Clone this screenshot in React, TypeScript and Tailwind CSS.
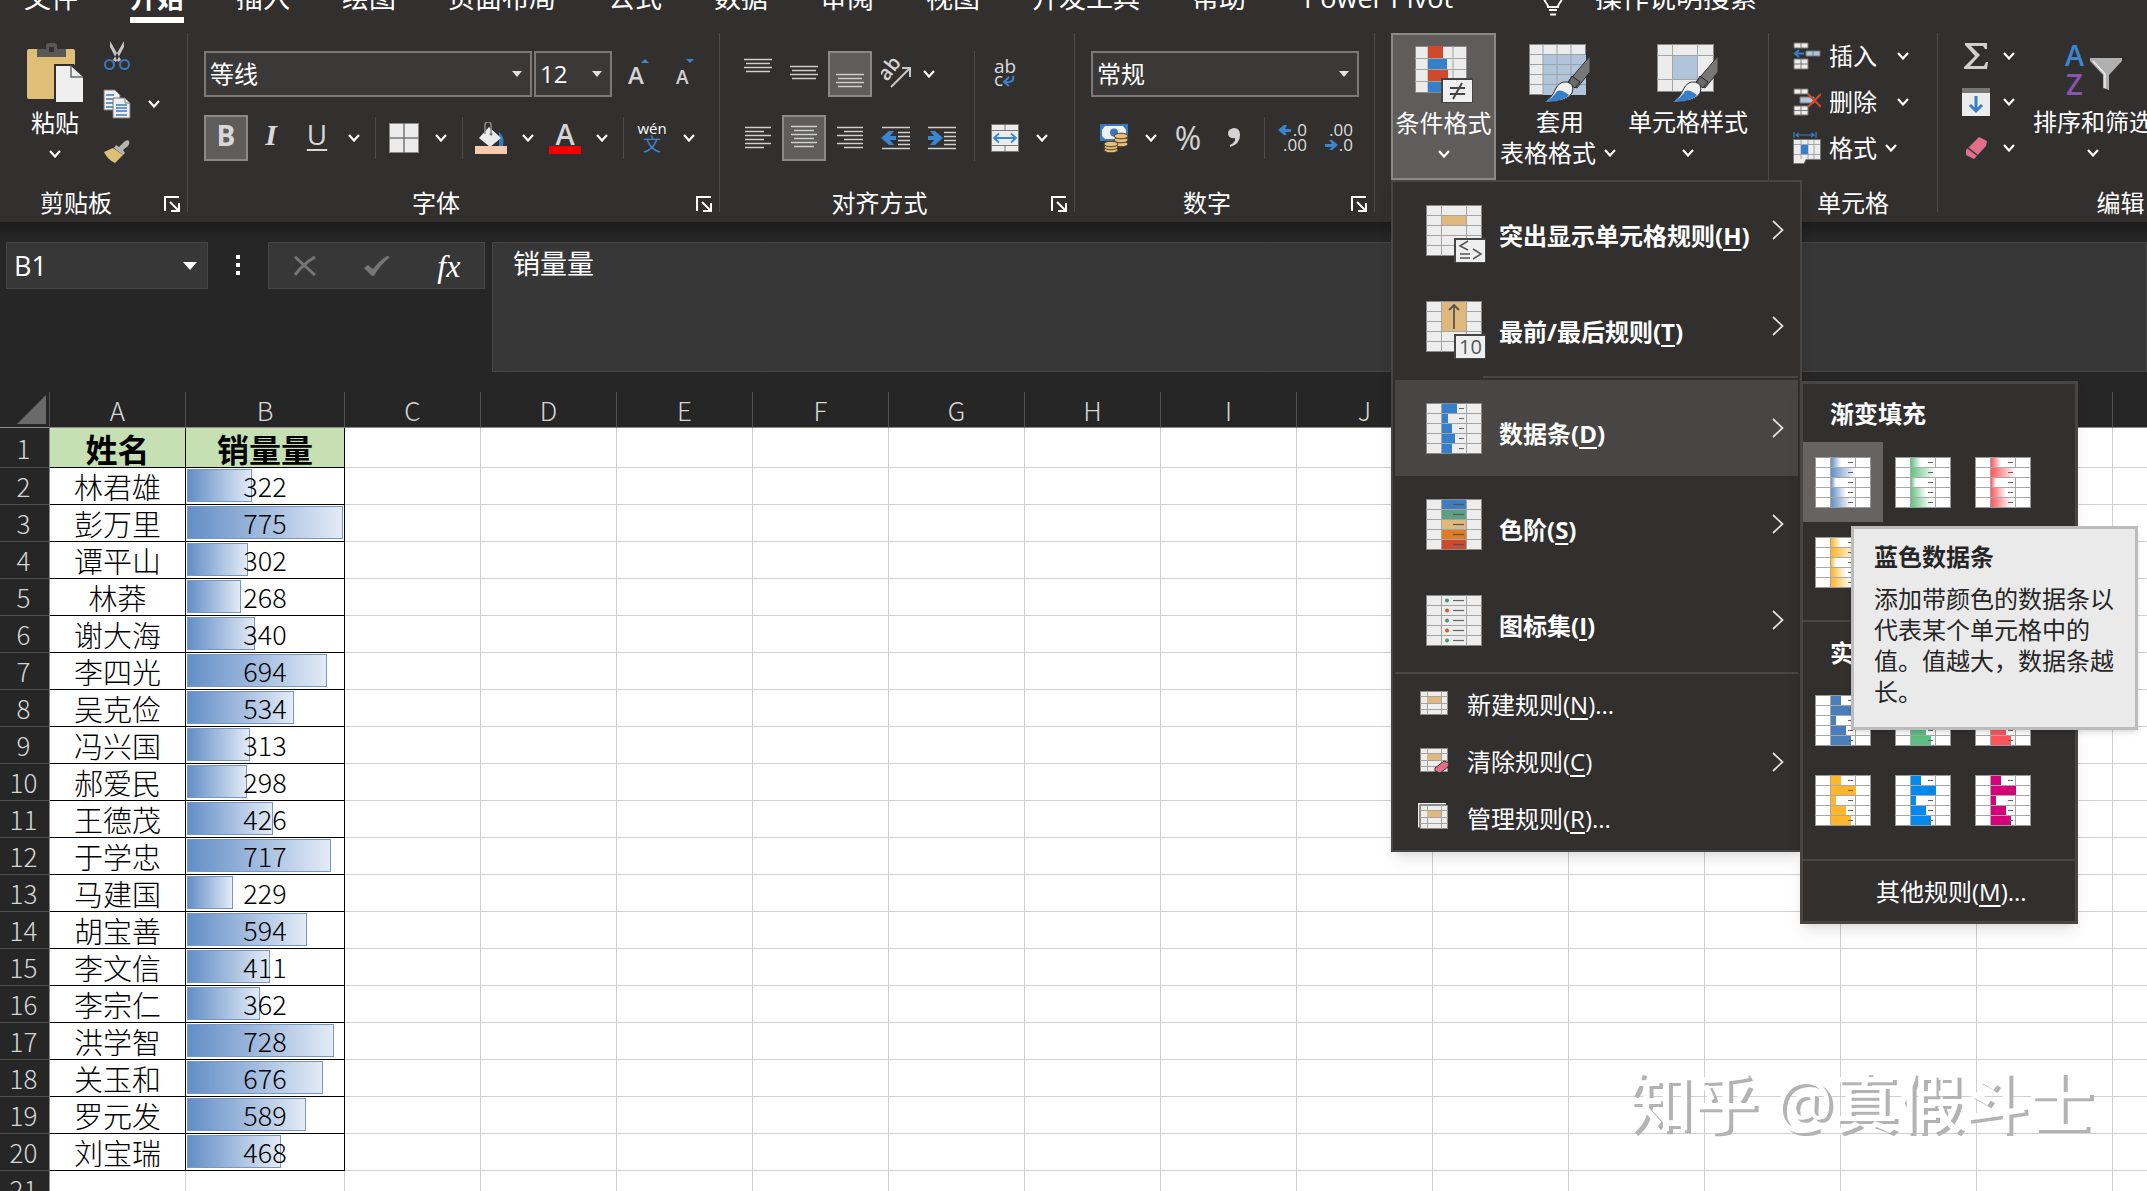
import React from "react";

const rows: [string, number][] = [
  ["林君雄", 322],
  ["彭万里", 775],
  ["谭平山", 302],
  ["林莽", 268],
  ["谢大海", 340],
  ["李四光", 694],
  ["吴克俭", 534],
  ["冯兴国", 313],
  ["郝爱民", 298],
  ["王德茂", 426],
  ["于学忠", 717],
  ["马建国", 229],
  ["胡宝善", 594],
  ["李文信", 411],
  ["李宗仁", 362],
  ["洪学智", 728],
  ["关玉和", 676],
  ["罗元发", 589],
  ["刘宝瑞", 468],
];

const maxValue = 775;
const emptyColumns = "CDEFGHIJKLMNOP".split("");

/* ---------- small shared parts ---------- */

function Chevron() {
  return (
    <svg className="w-3 h-2 shrink-0" viewBox="0 0 12 8" fill="none">
      <path d="M1 1l5 5.5L11 1" stroke="#fff" strokeWidth="2.2" />
    </svg>
  );
}

function ArrowRight() {
  return (
    <svg className="w-3 h-5 shrink-0" viewBox="0 0 12 20" fill="none">
      <path d="M1 1l9.500 9L1 19" stroke="#e0e0e0" strokeWidth="1.800" />
    </svg>
  );
}

function DropButton({ label, narrow }: { label: string; narrow?: boolean }) {
  return (
    <button
      aria-label={label}
      className={
        narrow
          ? "flex items-center justify-center w-5 h-[46px]"
          : "flex items-center justify-center w-7 h-[46px]"
      }
    >
      <Chevron />
    </button>
  );
}

type ToolProps = {
  label: string;
  active?: boolean;
  children: React.ReactNode;
};

function Tool({ label, active, children }: ToolProps) {
  return (
    <button
      aria-label={label}
      className={
        active
          ? "flex items-center justify-center w-11 mx-px h-[46px] bg-[#5e5d5b] border-2 border-[#8a8987]"
          : "flex items-center justify-center w-[46px] h-[46px]"
      }
    >
      {children}
    </button>
  );
}

function Divider() {
  return <div className="w-px h-[42px] ml-[7px] mr-[5px] bg-[#4c4b49]" />;
}

type GroupProps = {
  title: string;
  width: string;
  launcher?: boolean;
  children: React.ReactNode;
};

function Group({ title, width, launcher, children }: GroupProps) {
  return (
    <section
      aria-label={title}
      className={`flex flex-col shrink-0 h-[179px] border-r border-[#4c4b49] ${width}`}
    >
      <div className="h-[157px]">{children}</div>
      <div className="flex h-[22px]">
        <h2
          className={
            launcher
              ? "flex-1 pr-3 text-center leading-[26px]"
              : "flex-1 text-center leading-[26px]"
          }
        >
          {title}
        </h2>
        {launcher && (
          <button aria-label={`${title}设置`} className="self-end mr-[7px]">
            <svg className="w-4 h-4" viewBox="0 0 16 16" fill="none" stroke="#fff" strokeWidth="2">
              <path d="M1 15V1h14" />
              <path d="M6 6l8 8M15 7v8H7" />
            </svg>
          </button>
        )}
      </div>
    </section>
  );
}

type ComboProps = {
  label: string;
  value: string;
  width: string;
};

function Combo({ label, value, width }: ComboProps) {
  return (
    <div className={`relative h-[46px] ${width}`}>
      <select
        aria-label={label}
        className="w-full h-full pl-1 appearance-none bg-[#3a3938] border-2 border-[#7b7a78] text-2xl"
      >
        <option>{value}</option>
      </select>
      <svg className="absolute right-[10px] top-5 w-[10px] h-[6px]" viewBox="0 0 10 6">
        <path d="M0 0h10L5 6z" fill="#e0e0e0" />
      </svg>
    </div>
  );
}

/* ---------- ribbon icons ---------- */

function PasteIcon() {
  return (
    <svg className="w-14 h-[60px]" viewBox="0 0 56 60">
      <rect x="0" y="6" width="48" height="50" rx="2" fill="#dfbe78" />
      <path d="M10 6h9V3q0-3 3-3h5q3 0 3 3v3h9v8H10z" fill="#595857" />
      <rect x="22" y="4" width="5" height="5" fill="#32302f" />
      <path d="M27 21h20l9 12v27H27z" fill="#32302f" />
      <path d="M29 23h15l12 11v25H29z" fill="#efefef" />
      <path d="M44 23v11h12" fill="none" stroke="#6b6b6b" strokeWidth="1.500" />
    </svg>
  );
}

function ScissorsIcon() {
  return (
    <svg className="w-[26px] h-[30px]" viewBox="0 0 26 30">
      <path d="M6 0l11 19-3 2L6 6zM20 0L9 19l3 2 8-15z" fill="#c4c4c4" />
      <circle cx="5.500" cy="23.500" r="4.500" fill="none" stroke="#3b79bf" strokeWidth="2" />
      <circle cx="20.500" cy="23.500" r="4.500" fill="none" stroke="#3b79bf" strokeWidth="2" />
    </svg>
  );
}

function CopyIcon() {
  return (
    <svg className="w-7 h-[30px]" viewBox="0 0 28 30">
      <path d="M1 1h11l5 5v15H1z" fill="#f0f0f0" stroke="#777" />
      <path d="M3 6h8M3 10h8M3 14h8M3 18h7" stroke="#3b79bf" strokeWidth="1.500" />
      <path d="M10 9h12l5 5v15H10z" fill="#f0f0f0" stroke="#777" />
      <path d="M22 9v5h5" fill="none" stroke="#777" />
      <path d="M13 16h11M13 19h11M13 22h11M13 26h11" stroke="#3b79bf" strokeWidth="1.500" />
    </svg>
  );
}

function BrushIcon() {
  return (
    <svg className="w-[26px] h-6" viewBox="0 0 26 24">
      <path d="M25 1q-2-2-5 1l-5 5-3-2-2 3 9 7 2-2-2-3 5-4q2-3 1-5z" fill="#b4b4b4" />
      <path d="M9 8L0 12q4 8 11 11l8-8z" fill="#dfbe78" />
    </svg>
  );
}

function BordersIcon() {
  return (
    <svg className="w-[30px] h-[30px]" viewBox="0 0 30 30">
      <rect x=".5" y=".5" width="29" height="29" fill="#ececec" stroke="#8a8a8a" />
      <path d="M15 0v30M0 15h30" stroke="#777" strokeWidth="1.500" />
    </svg>
  );
}

function FillIcon() {
  return (
    <svg className="w-8 h-8" viewBox="0 0 32 32">
      <path d="M24 10q6 4 4 14h-4z" fill="#3b79bf" />
      <path d="M14 5l12 11-11 9L4 16z" fill="#ececec" />
      <path d="M10 12V3q0-3 3-3t3 3v8" fill="none" stroke="#8a8a8a" strokeWidth="1.500" />
      <circle cx="16" cy="12" r="1.500" fill="#777" />
      <rect y="24" width="32" height="8" fill="#f8cbad" />
    </svg>
  );
}

type LinesProps = { lines: [number, number, number][] };

// each line is [start, end, y]
function LinesIcon({ lines }: LinesProps) {
  return (
    <svg className="w-7 h-8" viewBox="0 0 28 32">
      {lines.map(([x1, x2, y]) => (
        <path key={y} d={`M${x1} ${y}.5H${x2}`} stroke="#cfcfcf" strokeWidth="1.500" />
      ))}
    </svg>
  );
}

function IndentIcon({ out }: { out?: boolean }) {
  return (
    <svg className="w-[30px] h-6" viewBox="0 0 30 24">
      <path
        d="M1 1.500h28M17 6.500h12M17 10.500h12M17 14.500h12M17 18.500h12M1 22.500h28"
        stroke="#cfcfcf"
        strokeWidth="1.500"
      />
      <path
        d={out ? "M15 10H9l4-5H8L0 12l8 7h5l-4-5h6z" : "M1 10h6L3 5h5l8 7-8 7H3l4-5H1z"}
        fill="#3b86d0"
      />
    </svg>
  );
}

function OrientationIcon() {
  return (
    <svg className="w-[30px] h-9" viewBox="0 0 30 36">
      <text
        x="6"
        y="26"
        fontSize="20"
        fontWeight="600"
        fill="#d4d4d4"
        fontFamily="Open Sans"
        transform="rotate(-52 6 26)"
      >
        ab
      </text>
      <path d="M10 31L29 12M21 12h8v9" fill="none" stroke="#c8c8c8" strokeWidth="2" />
    </svg>
  );
}

function WrapIcon() {
  return (
    <svg className="w-6 h-[30px]" viewBox="0 0 24 30">
      <text x="1" y="14" fontSize="19" fill="#dcdcdc" fontFamily="Open Sans">
        ab
      </text>
      <text x="1" y="27" fontSize="19" fill="#dcdcdc" fontFamily="Open Sans">
        c
      </text>
      <path d="M20 17q2 7-8 6M16 18l-5 5 5 4" fill="none" stroke="#3b86d0" strokeWidth="2" />
    </svg>
  );
}

function MergeIcon() {
  return (
    <svg className="w-7 h-7" viewBox="0 0 28 28">
      <rect x=".5" y=".5" width="27" height="27" fill="#ececec" stroke="#777" />
      <path d="M0 6.500h28M0 21.500h28M14 0v6M14 22v6" stroke="#777" />
      <path d="M3 14h22M8 9.500L3 14l5 4.500M20 9.500l5 4.500-5 4.500" fill="none" stroke="#3b86d0" strokeWidth="1.800" />
    </svg>
  );
}

function CurrencyIcon() {
  return (
    <svg className="w-[30px] h-[30px]" viewBox="0 0 30 30">
      <rect x="1" y="1" width="28" height="17" fill="#3b79bf" />
      <path d="M6 3h18l3 4v6l-3 3H6l-3-3V7z" fill="#f0f0f0" />
      <circle cx="15" cy="9.500" r="4" fill="#3b79bf" />
      {[21, 17, 13].map((y) => (
        <ellipse key={y} cx="22" cy={y} rx="7" ry="2.800" fill="#e6bd7c" stroke="#4a3d28" />
      ))}
      {[27, 24, 21].map((y) => (
        <ellipse key={y} cx="12" cy={y} rx="7" ry="2.800" fill="#e6bd7c" stroke="#4a3d28" />
      ))}
    </svg>
  );
}

function DecimalIcon({ more }: { more?: boolean }) {
  return (
    <svg className="w-[30px] h-[30px]" viewBox="0 0 30 30">
      <text x="29" y="13" textAnchor="end" fontSize="17" fill="#dcdcdc" fontFamily="Open Sans">
        {more ? ".0" : ".00"}
      </text>
      <text x="29" y="28" textAnchor="end" fontSize="17" fill="#dcdcdc" fontFamily="Open Sans">
        {more ? ".00" : ".0"}
      </text>
      <path
        d={more ? "M0 7l6-5h3L7 6h6v3H7l2 3H6z" : "M14 22l-6-5H5l3 4H1v3h7l-3 3h3z"}
        fill="#3b86d0"
      />
    </svg>
  );
}

function ConditionalIcon() {
  return (
    <svg className="w-[58px] h-[58px]" viewBox="0 0 58 58">
      <rect x=".5" y="1.500" width="51" height="46" fill="#ececec" stroke="#8a8a8a" />
      <path d="M13 1v46M26 1v46M38 1v46M0 13.500h51M0 24.500h51M0 36.500h51" stroke="#a5a5a5" />
      <rect x="13" y="1" width="15" height="12" fill="#cf4a2c" />
      <rect x="13" y="14" width="19" height="10" fill="#3680cb" />
      <rect x="13" y="25" width="20" height="11" fill="#cf4a2c" />
      <rect x="13" y="37" width="15" height="10" fill="#3680cb" />
      <rect x="26" y="33" width="32" height="25" fill="#444" />
      <rect x="28" y="35" width="29" height="22" fill="#f0f0f0" />
      <path d="M35 43h15M35 49h15M47 38l-9 16" stroke="#444" strokeWidth="2" />
    </svg>
  );
}

function PaintBrush() {
  return (
    <g>
      <path d="M61 12v16L48 44l-9-6z" fill="#777" stroke="#32302f" />
      <path d="M43 32l8 6-5 6-7-5z" fill="#6a6a6a" stroke="#222" />
      <path d="M38 38q8 2 5 11-4 9-28 9 8-4 11-12 4-9 12-8z" fill="#f0f0f0" stroke="#32302f" />
      <path d="M28 47q5-2 12 4-4 6-24 7 8-4 12-11z" fill="#3680cb" />
    </g>
  );
}

function TableFormatIcon() {
  return (
    <svg className="w-[62px] h-[58px]" viewBox="0 0 62 58">
      <rect x=".5" y=".5" width="56" height="50" fill="#ececec" stroke="#8a8a8a" />
      <rect x="14" y="10" width="43" height="41" fill="#b1c5da" />
      <path d="M14 0v51M28 0v51M42 0v51M0 10.500h57M0 20.500h57M0 30.500h57M0 40.500h57" stroke="#9aa3ac" />
      <PaintBrush />
    </svg>
  );
}

function CellStyleIcon() {
  return (
    <svg className="w-[62px] h-[58px]" viewBox="0 0 62 58">
      <rect x=".5" y=".5" width="56" height="47" fill="#ececec" stroke="#8a8a8a" />
      <path d="M15.500 0v48M40.500 0v48M0 11.500h57M0 35.500h57" stroke="#a5a5a5" />
      <rect x="16" y="12" width="24" height="23" fill="#b1c5da" />
      <PaintBrush />
    </svg>
  );
}

function InsertCellsIcon() {
  return (
    <svg className="w-7 h-7" viewBox="0 0 28 28">
      <path d="M1 1h14v5H1zM1 17h14v10H1zM8 1v5M8 17v10M1 22h14" fill="#ececec" stroke="#777" />
      <path d="M13 9h14v5H13zM20 9v5" fill="#b1c5da" stroke="#777" />
      <path d="M11 11.500H2M6 8l-4 3.500L6 15" fill="none" stroke="#3680cb" strokeWidth="2" />
    </svg>
  );
}

function DeleteCellsIcon() {
  return (
    <svg className="w-7 h-7" viewBox="0 0 28 28">
      <path d="M1 1h14v5H1zM1 18h14v9H1zM8 1v5M8 18v9M1 22.500h14" fill="#ececec" stroke="#777" />
      <path d="M7 9h14v6H7z" fill="#b1c5da" stroke="#777" />
      <path d="M15 6l13 13M28 6L15 19" stroke="#cf4a2c" strokeWidth="2.200" />
    </svg>
  );
}

function FormatCellsIcon() {
  return (
    <svg className="w-7 h-8" viewBox="0 0 28 32">
      <path d="M1 0v6M23 0v6M3 3h18M6 1L3 3l3 2M18 1l3 2-3 2" fill="none" stroke="#3680cb" strokeWidth="1.200" />
      <path d="M.5 7.500h27v20H13l-2 4H.5z" fill="#ececec" stroke="#777" />
      <path d="M1 12.500h26M1 22.500h26M8 8v19M15 8v19M21 8v19" stroke="#a5a5a5" />
      <rect x="8" y="13" width="7" height="9" fill="#3680cb" />
    </svg>
  );
}

function FillDownIcon() {
  return (
    <svg className="w-7 h-7" viewBox="0 0 28 28">
      <rect width="28" height="28" fill="#ececec" />
      <rect width="28" height="5" fill="#777" />
      <path d="M14 8v15M8 17l6 6 6-6" fill="none" stroke="#3680cb" strokeWidth="3" />
    </svg>
  );
}

function EraserIcon() {
  return (
    <svg className="w-7 h-6" viewBox="0 0 28 24">
      <path d="M17 1l8 4-1 5-12 13-8-4v-5z" fill="#e0708a" />
      <path d="M6 12l9 7" stroke="#32302f" strokeWidth="1.500" />
    </svg>
  );
}

function SortFilterIcon() {
  return (
    <svg className="w-[60px] h-[58px]" viewBox="0 0 60 58">
      <text x="2" y="22" fontSize="29" fontWeight="600" fill="#3b86d0" fontFamily="Open Sans">
        A
      </text>
      <text x="3" y="51" fontSize="29" fontWeight="600" fill="#8a55ae" fontFamily="Open Sans">
        Z
      </text>
      <path d="M27 14h32v3L46 31v15l-6-2V31L27 17z" fill="#b0b0b0" />
      <path d="M30 17l12 13v14" fill="none" stroke="#eee" strokeWidth="1.500" />
    </svg>
  );
}

/* ---------- menu icons ---------- */

function SheetIcon({ children }: { children?: React.ReactNode }) {
  return (
    <svg className="w-[60px] h-[58px] shrink-0" viewBox="0 0 60 58">
      <rect x=".5" y=".5" width="55" height="50" fill="#ededed" stroke="#8a8a8a" />
      <path d="M15.500 0v51M40.500 0v51M0 10.500h56M0 20.500h56M0 30.500h56M0 40.500h56" stroke="#a3a3a3" />
      {children}
    </svg>
  );
}

function BadgeBox() {
  return (
    <g>
      <rect x="28" y="33" width="32" height="25" fill="#444" />
      <rect x="30" y="35" width="29" height="22" fill="#efefef" />
    </g>
  );
}

function HighlightIcon() {
  return (
    <SheetIcon>
      <rect x="16" y="11" width="24" height="9" fill="#deb87c" />
      <BadgeBox />
      <path d="M42 36l-8 5 8 4M34 49h10M34 53h10M47 44l8 5-8 5" fill="none" stroke="#555" strokeWidth="1.500" />
    </SheetIcon>
  );
}

function TopBottomIcon() {
  return (
    <SheetIcon>
      <rect x="16" y="1" width="24" height="29" fill="#deb87c" />
      <path d="M28 28V4M23 9l5-5 5 5" fill="none" stroke="#555" strokeWidth="1.800" />
      <BadgeBox />
      <text x="33" y="53" fontSize="20" fill="#555" fontFamily="Open Sans">
        10
      </text>
    </SheetIcon>
  );
}

function DataBarMenuIcon() {
  const bars = [15, 6, 10, 13, 10];
  return (
    <SheetIcon>
      <rect x="16" y="1" width="24" height="49" fill="#ededed" />
      {bars.map((w, i) => (
        <g key={i}>
          <rect x="16" y={i * 10 + 1} width={w} height="9" fill="#3680cb" />
          <path d={`M33 ${i * 10 + 5.5}h5`} stroke="#666" />
        </g>
      ))}
      <path d="M16 10.500h24M16 20.500h24M16 30.500h24M16 40.500h24" stroke="#a3a3a3" />
    </SheetIcon>
  );
}

function ColorScaleIcon() {
  const scale = ["#3d7dc0", "#5fa085", "#deb87c", "#e07b28", "#cd4a2d"];
  return (
    <SheetIcon>
      {scale.map((color, i) => (
        <g key={color}>
          <rect x="16" y={i * 10 + 1} width="24" height="9" fill={color} />
          <path d={`M27 ${i * 10 + 5.5}h11`} stroke="#555" strokeWidth="1.200" />
        </g>
      ))}
    </SheetIcon>
  );
}

function IconSetIcon() {
  return (
    <SheetIcon>
      {[0, 1, 2, 3, 4].map((i) => (
        <g key={i}>
          <circle cx="21" cy={i * 10 + 5.5} r="2" fill={i % 2 ? "#cd5f2d" : "#4d9479"} />
          <path d={`M27 ${i * 10 + 5.5}h11`} stroke="#666" strokeWidth="1.200" />
        </g>
      ))}
    </SheetIcon>
  );
}

function RuleIcon({ kind }: { kind: string }) {
  return (
    <svg className="w-8 h-7 mb-1 shrink-0" viewBox="0 0 32 28">
      {kind === "manage" && <path d="M.5 24.500V.5H28" fill="none" stroke="#ededed" strokeWidth="2" />}
      <rect x="2.500" y="2.500" width="27" height="23" fill="#ededed" stroke="#8a8a8a" />
      <path d="M9.500 2v24M23.500 2v24M2 7.500h28M2 14.500h28M2 20.500h28" stroke="#a3a3a3" />
      <rect x="9" y="8" width="14" height="6" fill="#deb87c" />
      {kind === "clear" && <path d="M26 15l5 2-1 4-8 6-5-2v-3z" fill="#e0708a" stroke="#32302f" />}
    </svg>
  );
}

type DataBarSwatchProps = { color: string; gradient?: boolean };

function DataBarSwatch({ color, gradient }: DataBarSwatchProps) {
  const bars = [10, 25, 5, 15, 20];
  const id = `bar-${color.slice(1)}`;
  return (
    <svg className="w-14 h-[51px]" viewBox="0 0 56 51">
      {gradient && (
        <defs>
          <linearGradient id={id}>
            <stop offset="0" stopColor={color} />
            <stop offset="1" stopColor="#fff" />
          </linearGradient>
        </defs>
      )}
      <rect x=".5" y=".5" width="55" height="50" fill="#fff" stroke="#999" />
      <path d="M15.500 0v51M40.500 0v51M0 10.500h56M0 20.500h56M0 30.500h56M0 40.500h56" stroke="#a8a8a8" />
      {bars.map((w, i) => (
        <g key={i}>
          <rect
            x="16"
            y={i * 10 + 1}
            width={w}
            height="9"
            fill={gradient ? `url(#${id})` : color}
          />
          <path d={`M33 ${i * 10 + 5.5}h5`} stroke="#666" />
        </g>
      ))}
    </svg>
  );
}

/* ---------- menus ---------- */

type MenuItemProps = {
  icon: React.ReactNode;
  text: string;
  hotkey: string;
  active?: boolean;
};

function BigMenuItem({ icon, text, hotkey, active }: MenuItemProps) {
  return (
    <button
      className={
        active
          ? "flex items-center justify-between w-full h-24 pl-[31px] pr-[14px] bg-[#484644]"
          : "flex items-center justify-between w-full h-24 pl-[31px] pr-[14px]"
      }
    >
      <span className="flex items-center gap-[13px] pt-2">
        {icon}
        <span className="pt-1 font-bold leading-8">
          {text}(<u className="underline-offset-4">{hotkey}</u>)
        </span>
      </span>
      <ArrowRight />
    </button>
  );
}

type RuleItemProps = {
  kind: string;
  text: string;
  hotkey: string;
  suffix?: string;
};

function RuleItem({ kind, text, hotkey, suffix }: RuleItemProps) {
  return (
    <button className="flex items-center w-full h-[57px] pl-[23px] pr-[14px] pb-1">
      <RuleIcon kind={kind} />
      <span className="flex-1 pl-[17px] text-left">
        {text}(<u className="underline-offset-4">{hotkey}</u>){suffix}
      </span>
      {kind === "clear" && <ArrowRight />}
    </button>
  );
}

function Tooltip() {
  return (
    <div
      role="tooltip"
      className="absolute left-[48px] top-[142px] z-30 w-[287px] h-[204px] pl-5 pt-2.5 bg-[#eaeaea] border-3 border-[#bcbcbc] text-[#262626] shadow-md"
    >
      <p className="font-bold leading-9">蓝色数据条</p>
      <p className="mt-2 leading-[31px]">
        添加带颜色的数据条以
        <br />
        代表某个单元格中的
        <br />
        值。值越大，数据条越
        <br />
        长。
      </p>
    </div>
  );
}

function DataBarMenu() {
  const gradientColors = ["#638ec6", "#63c384", "#ff555a", "#ffb628"];
  const solidColors = ["#4a7ebb", "#5bc080", "#ff555a", "#ffb628", "#008aef", "#d6007b"];
  return (
    <div className="absolute left-[407px] top-[199px] z-20 w-[278px] border-3 border-[#484644] bg-[#32302f] shadow-lg">
      <h3 className="h-[58px] pl-[27px] font-bold leading-[60px]">渐变填充</h3>
      <div className="grid grid-cols-[80px_80px_80px]">
        {gradientColors.map((color) => (
          <button
            key={color}
            aria-label={`渐变 ${color}`}
            className={
              color === "#638ec6"
                ? "flex items-center justify-center h-20 bg-[#656463]"
                : "flex items-center justify-center h-20"
            }
          >
            <DataBarSwatch color={color} gradient />
          </button>
        ))}
      </div>
      <h3 className="h-[60px] mt-[18px] pl-[27px] border-t-2 border-[#484644] font-bold leading-[62px]">
        实心填充
      </h3>
      <div className="grid grid-cols-[80px_80px_80px]">
        {solidColors.map((color) => (
          <button
            key={color}
            aria-label={`实心 ${color}`}
            className="flex items-center justify-center h-20"
          >
            <DataBarSwatch color={color} />
          </button>
        ))}
      </div>
      <button className="w-full h-[62px] mt-[19px] pl-[73px] border-t-2 border-[#484644] text-left">
        其他规则(<u className="underline-offset-4">M</u>)...
      </button>
      <Tooltip />
    </div>
  );
}

function ConditionalMenu() {
  return (
    <div className="absolute left-0 top-full z-10 w-[411px] px-[2px] pb-px border-2 border-[#484644] bg-[#32302f] shadow-lg">
      <BigMenuItem icon={<HighlightIcon />} text="突出显示单元格规则" hotkey="H" />
      <BigMenuItem icon={<TopBottomIcon />} text="最前/最后规则" hotkey="T" />
      <div className="h-0.5 ml-[88px] my-0.5 bg-[#484644]" />
      <BigMenuItem icon={<DataBarMenuIcon />} text="数据条" hotkey="D" active />
      <BigMenuItem icon={<ColorScaleIcon />} text="色阶" hotkey="S" />
      <BigMenuItem icon={<IconSetIcon />} text="图标集" hotkey="I" />
      <div className="h-0.5 my-1 bg-[#484644]" />
      <RuleItem kind="new" text="新建规则" hotkey="N" suffix="..." />
      <RuleItem kind="clear" text="清除规则" hotkey="C" />
      <RuleItem kind="manage" text="管理规则" hotkey="R" suffix="..." />
      <DataBarMenu />
    </div>
  );
}

/* ---------- ribbon ---------- */

function Tabs() {
  const tabs = ["文件", "开始", "插入", "绘图", "页面布局", "公式", "数据", "审阅", "视图", "开发工具", "帮助"];
  return (
    <nav className="flex items-end gap-[52px] h-[33px] pl-6 overflow-hidden text-[27px] leading-[38px]">
      {tabs.map((tab) => (
        <a
          key={tab}
          href="#"
          className={
            tab === "开始"
              ? "shrink-0 mb-[10px] border-b-6 border-white font-bold"
              : "shrink-0 mb-4"
          }
        >
          {tab}
        </a>
      ))}
      <a href="#" className="shrink-0 px-1.5 mb-4">
        Power Pivot
      </a>
      <a href="#" className="flex items-end shrink-0 gap-8 pl-8">
        <svg className="w-5 h-[26px] mb-[17px]" viewBox="0 0 20 26" fill="none" stroke="#fff" strokeWidth="2">
          <path d="M5 17C5 13 1 12 1 8a9 8 0 0118 0c0 4-4 5-4 9zM6 20h8M7 24.500h6" />
        </svg>
        <span className="mb-4">操作说明搜索</span>
      </a>
    </nav>
  );
}

function ClipboardGroup() {
  return (
    <Group title="剪贴板" width="w-[188px]" launcher>
      <div className="flex pl-6">
        <button className="flex flex-col items-center w-[62px] pt-[10px] leading-[31px]">
          <PasteIcon />
          <span className="pt-1">粘贴</span>
          <span className="flex items-center h-[31px]">
            <Chevron />
          </span>
        </button>
        <div className="flex flex-col gap-0.5 pl-2">
          <Tool label="剪切">
            <ScissorsIcon />
          </Tool>
          <div className="flex">
            <Tool label="复制">
              <CopyIcon />
            </Tool>
            <DropButton label="复制选项" />
          </div>
          <Tool label="格式刷">
            <BrushIcon />
          </Tool>
        </div>
      </div>
    </Group>
  );
}

function FontGroup() {
  return (
    <Group title="字体" width="w-[532px]" launcher>
      <div className="flex flex-col gap-[18px] pl-4 pt-[18px]">
        <div className="flex gap-0.5">
          <Combo label="字体" value="等线" width="w-[328px]" />
          <Combo label="字号" value="12" width="w-[78px]" />
          <div className="flex">
            <button aria-label="增大字号" className="flex items-center justify-center w-12">
              <svg className="w-6 h-8" viewBox="0 0 24 32">
                <text x="2" y="26" fontSize="24" fontWeight="600" fill="#d4d4d4" fontFamily="Open Sans">
                  A
                </text>
                <path d="M15 5h8l-4-4z" fill="#3b86d0" />
              </svg>
            </button>
            <button aria-label="减小字号" className="flex items-center justify-center w-12">
              <svg className="w-6 h-8" viewBox="0 0 24 32">
                <text x="2" y="26" fontSize="19" fontWeight="600" fill="#d4d4d4" fontFamily="Open Sans">
                  A
                </text>
                <path d="M12 1h8l-4 4z" fill="#3b86d0" />
              </svg>
            </button>
          </div>
        </div>
        <div className="flex items-center">
          <button className="w-11 h-[46px] pb-1.5 bg-[#5e5d5b] border-2 border-[#8a8987] text-[28px] leading-9 font-bold text-[#d8d8d8]">
            B
          </button>
          <button className="w-[46px] h-[46px] pb-1.5 text-[30px] leading-9 italic font-bold font-['Liberation_Serif'] text-[#d8d8d8]">
            I
          </button>
          <button className="w-[46px] h-[46px] pb-2 text-[28px] leading-9 font-medium underline underline-offset-4 decoration-2 text-[#d8d8d8]">
            U
          </button>
          <DropButton label="下划线选项" />
          <Divider />
          <Tool label="边框">
            <BordersIcon />
          </Tool>
          <DropButton label="边框选项" />
          <Divider />
          <Tool label="填充颜色">
            <FillIcon />
          </Tool>
          <DropButton label="填充颜色选项" />
          <Tool label="字体颜色">
            <svg className="w-8 h-8" viewBox="0 0 32 32">
              <text
                x="16"
                y="23"
                textAnchor="middle"
                fontSize="29"
                fontWeight="600"
                fill="#d4d4d4"
                fontFamily="Open Sans"
              >
                A
              </text>
              <rect y="24" width="32" height="8" fill="#f00000" />
            </svg>
          </Tool>
          <DropButton label="字体颜色选项" />
          <Divider />
          <Tool label="拼音指南">
            <span className="flex flex-col items-center pb-1">
              <span className="text-[15px] leading-4">wén</span>
              <span className="text-lg leading-4 text-[#3b86d0]">文</span>
            </span>
          </Tool>
          <DropButton label="拼音选项" />
        </div>
      </div>
    </Group>
  );
}

function AlignGroup() {
  return (
    <Group title="对齐方式" width="w-[355px]" launcher>
      <div className="flex pl-[15px] pt-[18px]">
        <div className="flex flex-col gap-[18px] w-[239px]">
          <div className="flex">
            <Tool label="顶端对齐">
              <LinesIcon lines={[[0, 28, 1], [2, 26, 5], [0, 28, 9], [2, 26, 13]]} />
            </Tool>
            <Tool label="垂直居中">
              <LinesIcon lines={[[0, 28, 8], [2, 26, 12], [0, 28, 16], [2, 26, 20]]} />
            </Tool>
            <Tool label="底端对齐" active>
              <LinesIcon lines={[[0, 28, 16], [2, 26, 20], [0, 28, 24], [2, 26, 28]]} />
            </Tool>
            <Tool label="方向">
              <OrientationIcon />
            </Tool>
            <DropButton label="方向选项" narrow />
          </div>
          <div className="flex">
            <Tool label="左对齐">
              <LinesIcon lines={[[1, 27, 5], [1, 20, 9], [1, 27, 13], [1, 20, 17], [1, 27, 21], [1, 20, 25]]} />
            </Tool>
            <Tool label="居中" active>
              <LinesIcon lines={[[1, 27, 4], [4, 24, 8], [1, 27, 12], [4, 24, 16], [1, 27, 20], [4, 24, 24]]} />
            </Tool>
            <Tool label="右对齐">
              <LinesIcon lines={[[1, 27, 5], [8, 27, 9], [1, 27, 13], [8, 27, 17], [1, 27, 21], [8, 27, 25]]} />
            </Tool>
            <Tool label="减少缩进量">
              <IndentIcon out />
            </Tool>
            <Tool label="增加缩进量">
              <IndentIcon />
            </Tool>
          </div>
        </div>
        <div className="w-px bg-[#4c4b49]" />
        <div className="flex flex-col gap-[18px] pl-[7px]">
          <Tool label="自动换行">
            <WrapIcon />
          </Tool>
          <div className="flex">
            <Tool label="合并后居中">
              <MergeIcon />
            </Tool>
            <DropButton label="合并选项" />
          </div>
        </div>
      </div>
    </Group>
  );
}

function NumberGroup() {
  return (
    <Group title="数字" width="w-[300px]" launcher>
      <div className="flex flex-col gap-[18px] pl-4 pt-[18px]">
        <Combo label="数字格式" value="常规" width="w-[268px]" />
        <div className="flex items-center">
          <Tool label="会计数字格式">
            <CurrencyIcon />
          </Tool>
          <DropButton label="会计选项" />
          <button className="w-[46px] text-[32px] leading-[46px] text-[#d4d4d4]">%</button>
          <Tool label="千位分隔样式">
            <svg className="w-3 h-5" viewBox="0 0 12 20">
              <path d="M6 0q6 0 6 7 0 9-10 12v-2q6-3 5-7-7 1-7-5 0-4 6-5z" fill="#d4d4d4" />
            </svg>
          </Tool>
          <Divider />
          <Tool label="增加小数位数">
            <DecimalIcon more />
          </Tool>
          <Tool label="减少小数位数">
            <DecimalIcon />
          </Tool>
        </div>
      </div>
    </Group>
  );
}

function StylesGroup() {
  return (
    <Group title="样式" width="w-[394px]">
      <div className="flex pl-4 leading-[31px]">
        <div className="relative">
          <button className="flex flex-col items-center w-[105px] h-[147px] pt-[10px] bg-[#5e5d5b] border-2 border-[#8a8987]">
            <ConditionalIcon />
            <span className="pt-1">条件格式</span>
            <span className="flex items-center h-[31px]">
              <Chevron />
            </span>
          </button>
          <ConditionalMenu />
        </div>
        <button className="flex flex-col items-center w-32 pt-[11px]">
          <TableFormatIcon />
          <span className="pt-1">套用</span>
          <span className="flex items-center gap-2 pr-1">
            表格格式
            <Chevron />
          </span>
        </button>
        <button className="flex flex-col items-center w-32 pt-[11px]">
          <CellStyleIcon />
          <span className="pt-1">单元格样式</span>
          <span className="flex items-center h-[31px]">
            <Chevron />
          </span>
        </button>
      </div>
    </Group>
  );
}

function CellsGroup() {
  return (
    <Group title="单元格" width="w-[169px]">
      <div className="flex flex-col pl-6">
        <button className="flex items-center gap-2 h-[46px]">
          <InsertCellsIcon />
          插入
          <span className="pl-3">
            <Chevron />
          </span>
        </button>
        <button className="flex items-center gap-2 h-[46px]">
          <DeleteCellsIcon />
          删除
          <span className="pl-3">
            <Chevron />
          </span>
        </button>
        <button className="flex items-center gap-2 h-[46px]">
          <FormatCellsIcon />
          格式
          <Chevron />
        </button>
      </div>
    </Group>
  );
}

function EditGroup() {
  return (
    <Group title="编辑" width="w-[366px]">
      <div className="flex pl-[15px]">
        <div className="flex flex-col">
          <div className="flex">
            <Tool label="自动求和">
              <svg className="w-6 h-7" viewBox="0 0 24 28">
                <path d="M1 1h22v6h-2l-2-3H7l9 9-10 11h14l2-4h2l-1 7H0v-2l11-11L1 3z" fill="#cfcfcf" />
              </svg>
            </Tool>
            <DropButton label="求和选项" narrow />
          </div>
          <div className="flex">
            <Tool label="填充">
              <FillDownIcon />
            </Tool>
            <DropButton label="填充选项" narrow />
          </div>
          <div className="flex">
            <Tool label="清除">
              <EraserIcon />
            </Tool>
            <DropButton label="清除选项" narrow />
          </div>
        </div>
        <button className="flex flex-col items-center w-[120px] ml-[14px] pt-[11px] leading-[31px]">
          <SortFilterIcon />
          <span className="pt-1 whitespace-nowrap">排序和筛选</span>
          <span className="flex items-center h-[31px]">
            <Chevron />
          </span>
        </button>
      </div>
    </Group>
  );
}

function Ribbon() {
  return (
    <header className="bg-[#32302f]">
      <Tabs />
      <div className="flex h-[189px]">
        <ClipboardGroup />
        <FontGroup />
        <AlignGroup />
        <NumberGroup />
        <StylesGroup />
        <CellsGroup />
        <EditGroup />
      </div>
    </header>
  );
}

/* ---------- formula bar ---------- */

function FormulaBar() {
  return (
    <div className="flex items-start h-[170px] pt-5 pl-1.5 bg-linear-to-b from-[#1c1c1c] to-[#262626] to-10%">
      <div className="flex items-center w-[202px] h-[47px] bg-[#373737] border border-[#464646]">
        <input aria-label="名称框" defaultValue="B1" className="w-0 flex-1 pl-[7px] text-[27px]" />
        <button aria-label="名称列表" className="px-[10px]">
          <svg className="w-[14px] h-2" viewBox="0 0 14 8">
            <path d="M0 0h14L7 8z" fill="#fff" />
          </svg>
        </button>
      </div>
      <svg className="w-[60px] h-[47px]" viewBox="0 0 60 47">
        <path d="M28 13h4v4h-4zM28 21h4v4h-4zM28 29h4v4h-4z" fill="#fff" />
      </svg>
      <div className="flex items-center justify-around w-[217px] h-[47px] bg-[#373737] border border-[#464646]">
        <button aria-label="取消">
          <svg className="w-6 h-5" viewBox="0 0 24 20">
            <path d="M2 1l20 18M22 1Q10 8 2 19" fill="none" stroke="#757575" strokeWidth="3" />
          </svg>
        </button>
        <button aria-label="输入">
          <svg className="w-[26px] h-5" viewBox="0 0 26 20">
            <path d="M0 12l4-3 5 4Q15 5 23 0l3 1Q16 9 10 20H8z" fill="#757575" />
          </svg>
        </button>
        <button className="font-['Liberation_Serif'] italic text-[32px] leading-10">fx</button>
      </div>
      <textarea
        aria-label="编辑栏"
        defaultValue="销量量"
        className="flex-1 h-[130px] ml-[7px] pl-[20px] pt-[3px] resize-none bg-[#373737] border border-[#464646] text-[27px] leading-9"
      />
    </div>
  );
}

/* ---------- sheet ---------- */

function RowHead({ n }: { n: number }) {
  return (
    <th className="p-0 pr-0.5 border-r border-b border-r-[#8a8a8a] border-b-[#505050] bg-[#262626] text-[26px] leading-9 font-light text-[#d6d6d6]">
      {n}
    </th>
  );
}

function EmptyCells() {
  return (
    <>
      {emptyColumns.map((c) => (
        <td key={c} className="border-r border-b border-[#d0d0d0]" />
      ))}
    </>
  );
}

function Sheet() {
  return (
    <main className="flex-1 overflow-hidden bg-white text-black">
      <table className="table-fixed w-[2249px] border-separate border-spacing-0 text-center font-['Noto_Sans_CJK_SC',sans-serif]">
        <colgroup>
          <col className="w-[50px]" />
          <col className="w-[136px]" />
          <col className="w-[159px]" />
          {emptyColumns.map((c) => (
            <col key={c} className="w-[136px]" />
          ))}
        </colgroup>
        <thead>
          <tr className="h-9 bg-[#262626] text-[26px] leading-8 text-[#d6d6d6]">
            <th aria-label="全选" className="p-0 border-r border-b border-r-[#505050] border-b-[#8a8a8a]">
              <svg className="w-[29px] h-[29px] ml-[17px]" viewBox="0 0 29 29">
                <path d="M29 0v29H0z" fill="#6a6a6a" />
              </svg>
            </th>
            {["A", "B", ...emptyColumns].map((c) => (
              <th key={c} className="p-0 border-r border-b border-r-[#505050] border-b-[#8a8a8a] font-light">
                {c}
              </th>
            ))}
          </tr>
        </thead>
        <tbody>
          <tr className="h-10">
            <RowHead n={1} />
            <td className="p-0 border-r border-b border-black bg-[#c6e0b4] text-[32px] leading-9 font-bold">姓名</td>
            <td className="p-0 border-r border-b border-black bg-[#c6e0b4] text-[32px] leading-9 font-bold">销量量</td>
            <EmptyCells />
          </tr>
          {rows.map(([name, value], i) => (
            <tr key={name} className="h-[37px]">
              <RowHead n={i + 2} />
              <td className="p-0 border-r border-b border-black text-[29px] leading-9 font-light">{name}</td>
              <td className="relative p-0 border-r border-b border-black text-[27px] leading-9 font-light">
                <div className="absolute top-px bottom-0.5 left-px right-px">
                  <div
                    className="h-full border border-[#7898c4] bg-linear-to-r from-[#638ec6] to-[#e3ebf6]"
                    style={{ width: `${(value / maxValue) * 100}%` }}
                  />
                </div>
                <span className="relative">{value}</span>
              </td>
              <EmptyCells />
            </tr>
          ))}
          <tr className="h-[37px]">
            <RowHead n={21} />
            <td className="border-r border-b border-[#d0d0d0]" />
            <td className="border-r border-b border-[#d0d0d0]" />
            <EmptyCells />
          </tr>
        </tbody>
      </table>
    </main>
  );
}

export default function App() {
  return (
    <div className="relative flex flex-col w-full h-screen overflow-hidden bg-[#262626] text-white text-2xl whitespace-nowrap font-['Open_Sans','Noto_Sans_CJK_SC',sans-serif]">
      <Ribbon />
      <FormulaBar />
      <Sheet />
      <p className="absolute right-[54px] bottom-[51px] text-[65px] leading-[76px] font-medium text-white [text-shadow:4px_3px_0_#b3b3b3] pointer-events-none">
        知乎 @真假斗士
      </p>
    </div>
  );
}
